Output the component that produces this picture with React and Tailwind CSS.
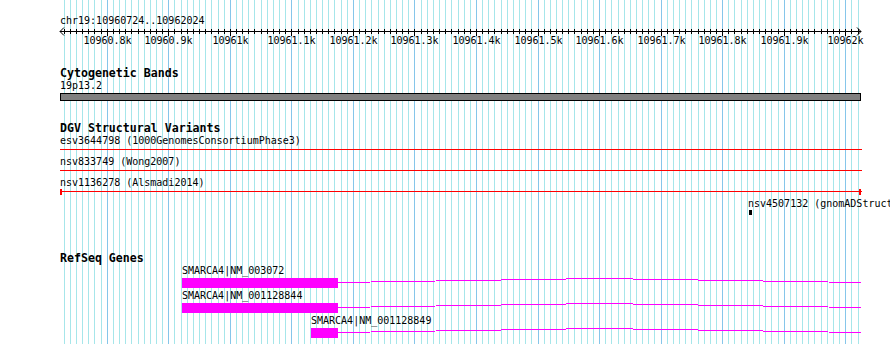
import React from "react";

const START = 10960724;
const END = 10962024;
const X0 = 60;
const SCALE = 800 / (END - START);
const px = (pos) => X0 + (pos - START) * SCALE;

const ticks = [];
for (let p = Math.ceil(START / 10) * 10; p <= END; p += 10) {
  ticks.push({ p, x: Math.round(px(p)) + 0.5, major: p % 100 === 0 });
}

const mono = "font-['DejaVu_Sans_Mono',monospace] text-[10px] leading-[12px] text-black whitespace-nowrap";
const bold = "font-['DejaVu_Sans_Mono',monospace] text-[11.6px] leading-[13px] font-bold text-black whitespace-nowrap";

const Grid = () => (
  <svg className="absolute inset-0" width="890" height="344" shapeRendering="crispEdges">
    {ticks.map((t) => (
      <line
        key={t.p}
        x1={t.x}
        x2={t.x}
        y1="0"
        y2="344"
        stroke={t.major ? "#86c6ea" : "#a6e6ea"}
        strokeWidth="1"
      />
    ))}
  </svg>
);

const Ruler = () => (
  <svg width="890" height="20" className="block" shapeRendering="crispEdges">
    <line x1="60" x2="861" y1="4.5" y2="4.5" stroke="#000" />
    <polyline points="64,0.5 60,4.5 64,8.5" fill="none" stroke="#000" shapeRendering="auto" />
    <polyline points="857,0.5 861,4.5 857,8.5" fill="none" stroke="#000" shapeRendering="auto" />
    {ticks.map((t) => (
      <line key={t.p} x1={t.x} x2={t.x} y1="2" y2={t.major ? 9 : 7} stroke="#000" />
    ))}
    {ticks
      .filter((t) => t.major)
      .map((t) => (
        <text
          key={t.p}
          x={t.x}
          y="17"
          textAnchor="middle"
          fontFamily="DejaVu Sans Mono, monospace"
          fontSize="10"
          fill="#000"
        >
          {t.p / 1000}k
        </text>
      ))}
  </svg>
);

const Variant = ({ label, caps }) => (
  <div>
    <div className={`${mono} pl-[60px]`}>{label}</div>
    <svg width="890" height="9" className="block" shapeRendering="crispEdges">
      <rect x="60" y="2" width="802" height="1" fill="#ff0000" />
      {caps && <rect x="60" y="0" width="2" height="6" fill="#ff0000" />}
      {caps && <rect x="859" y="0" width="2" height="6" fill="#ff0000" />}
    </svg>
  </div>
);

const Gene = ({ label, start }) => (
  <div>
    <div className={mono} style={{ paddingLeft: start }}>
      {label}
    </div>
    <svg width="890" height="13" className="block" shapeRendering="crispEdges">
      <rect x={start} y="1" width={338 - start} height="10" fill="#ff00ff" />
      <polyline points="338,5.5 599.5,1.5 861,5.5" fill="none" stroke="#ff00ff" strokeWidth="1" />
    </svg>
  </div>
);

export default function App() {
  return (
    <div className="relative w-[890px] h-[344px] overflow-hidden bg-white">
      <Grid />
      <div className="relative">
        <div className={`${mono} pl-[60px] pt-[15px]`}>chr19:10960724..10962024</div>
        <Ruler />

        <div className={`${bold} pl-[60px] mt-[20px]`}>Cytogenetic Bands</div>
        <div className={`${mono} pl-[60px]`}>19p13.2</div>
        <svg width="890" height="10" className="block" shapeRendering="crispEdges">
          <rect x="60.5" y="1.5" width="800" height="7" fill="#808080" stroke="#000" />
        </svg>

        <div className={`${bold} pl-[60px] mt-[20px]`}>DGV Structural Variants</div>
        <Variant label="esv3644798 (1000GenomesConsortiumPhase3)" />
        <Variant label="nsv833749 (Wong2007)" />
        <Variant label="nsv1136278 (Alsmadi2014)" caps />
        <div className={`${mono} pl-[748px]`}>nsv4507132 (gnomADStructuralVariants)</div>
        <svg width="890" height="6" className="block" shapeRendering="crispEdges">
          <rect x="749" y="0" width="3" height="5" fill="#000" />
        </svg>

        <div className={`${bold} pl-[60px] mt-[36px]`}>RefSeq Genes</div>
        <Gene label="SMARCA4|NM_003072" start={182} />
        <Gene label="SMARCA4|NM_001128844" start={182} />
        <Gene label="SMARCA4|NM_001128849" start={311} />
      </div>
    </div>
  );
}
